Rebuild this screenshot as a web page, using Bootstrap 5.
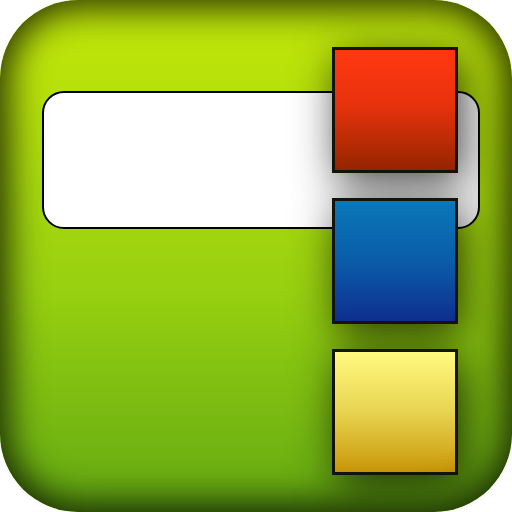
<!DOCTYPE html>
<html>
<head>
<meta charset="utf-8">
<title>Icon</title>
<link href="https://cdn.jsdelivr.net/npm/bootstrap@5.3.0/dist/css/bootstrap.min.css" rel="stylesheet">
<style>
html,body{margin:0;background:#fff;overflow:hidden}
.app-tile{width:512px;height:512px;border-radius:78px;overflow:hidden;position:relative;display:grid;background:linear-gradient(180deg,#c0e709 0%,#bbe30a 12%,#97d010 57%,#6cb012 92%,#62a812 100%)}
.tile-glow{grid-area:1/1;border-radius:78px;box-shadow:inset 0 0 36px 8px rgba(0,0,0,.8);z-index:3;pointer-events:none}
.slot-bar{grid-area:1/1;width:438px;height:138px;margin:91px 0 0 42px;background:#fff;border:2px solid #000;border-radius:22px;overflow:hidden;position:relative}
.tile-stack{grid-area:1/1;margin:47px 0 0 332px;width:126px;gap:25px;z-index:2}
.swatch{width:126px;height:126px;border:3px solid #14140c;box-shadow:6px 10px 44px 0 rgba(0,0,0,.72)}
.swatch-red{background:linear-gradient(180deg,#ff3812 0%,#e8320c 45%,#962600 100%)}
.swatch-blue{background:linear-gradient(180deg,#0a78b8 0%,#0a5ca8 50%,#0f2f90 100%)}
.swatch-yellow{background:linear-gradient(180deg,#fffa80 0%,#e8d450 50%,#c99708 100%)}
</style>
</head>
<body>
<div class="app-tile">
  <div class="slot-bar"></div>
  <div class="tile-stack d-flex flex-column align-self-start">
    <div class="swatch swatch-red"></div>
    <div class="swatch swatch-blue"></div>
    <div class="swatch swatch-yellow"></div>
  </div>
  <div class="tile-glow"></div>
</div>
<script src="https://cdn.jsdelivr.net/npm/bootstrap@5.3.0/dist/js/bootstrap.bundle.min.js"></script>
</body>
</html>
